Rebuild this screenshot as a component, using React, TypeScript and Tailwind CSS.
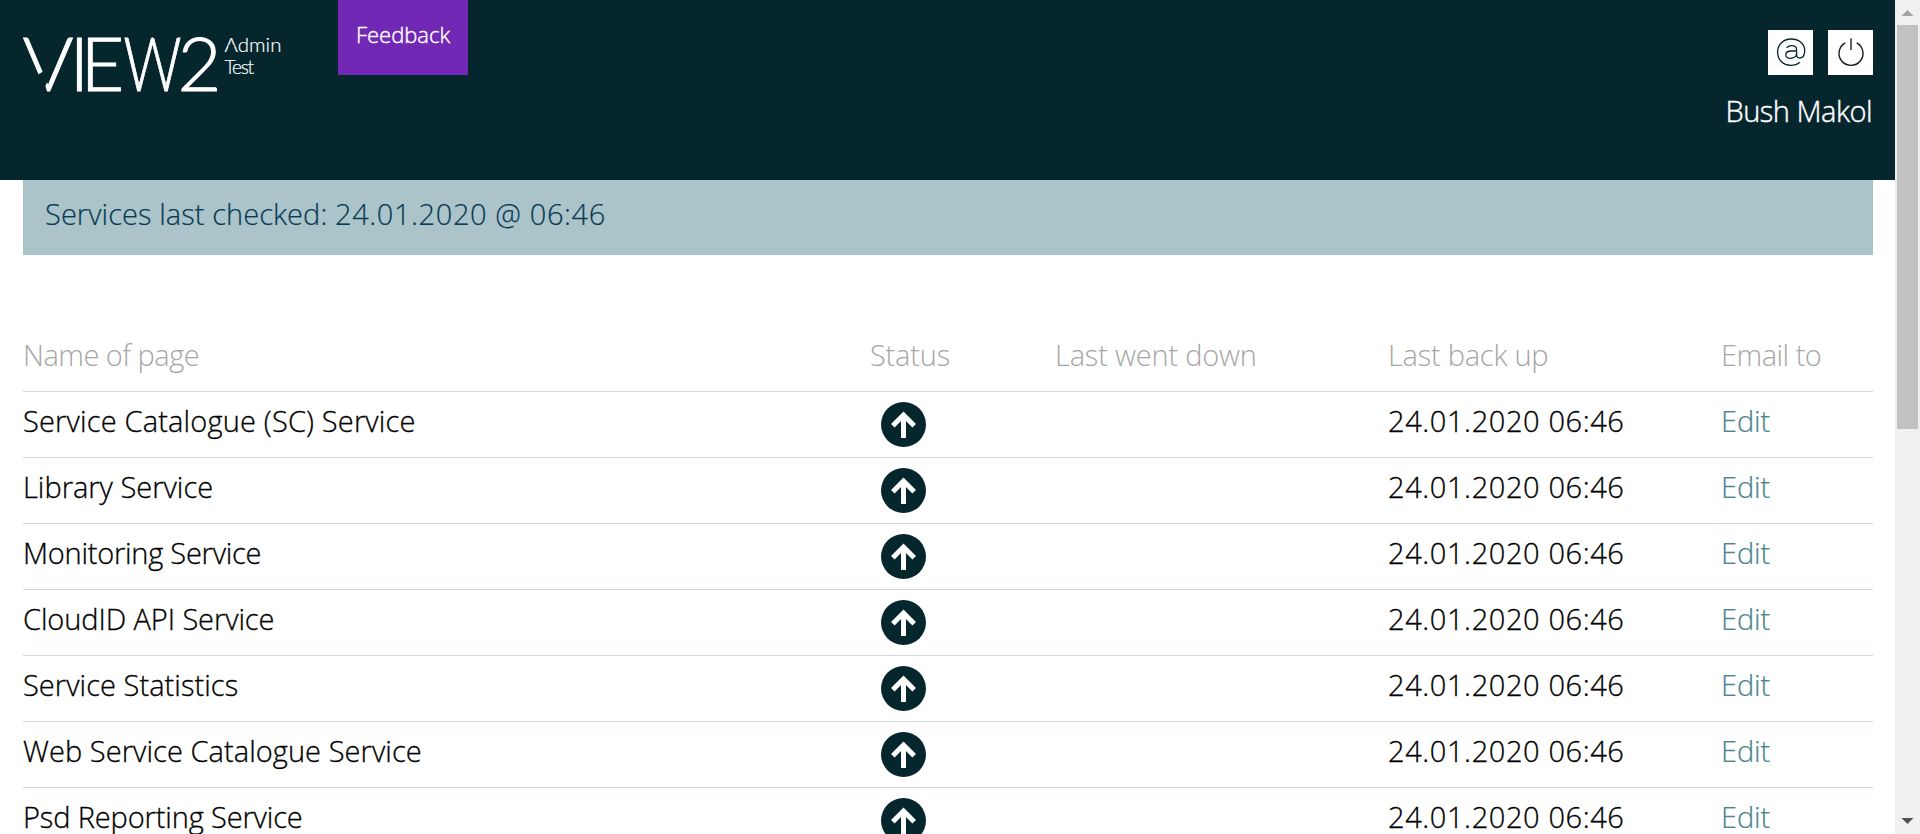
const services = [
  { name: 'Service Catalogue (SC) Service', tracking: 'tracking-[0.17px]' },
  { name: 'Library Service', tracking: 'tracking-[0px]' },
  { name: 'Monitoring Service', tracking: 'tracking-[-0.24px]' },
  { name: 'CloudID API Service', tracking: 'tracking-[-0.09px]' },
  { name: 'Service Statistics', tracking: 'tracking-[0.05px]' },
  { name: 'Web Service Catalogue Service', tracking: 'tracking-[0.06px]' },
  { name: 'Psd Reporting Service', tracking: 'tracking-[-0.14px]' },
];

function Logo() {
  return (
    <svg className="h-[100px] w-[270px] fill-white" viewBox="0 -16 270 100">
      <text
        y="61.3"
        className="stroke-white stroke-[0.9] font-['Lato',sans-serif] text-[75.5px] font-light"
      >
        <tspan x="-0.5" textLength="51" lengthAdjust="spacingAndGlyphs">V</tspan>
        <tspan x="46.5">I</tspan>
        <tspan x="57.5">E</tspan>
        <tspan x="100.5" textLength="58" lengthAdjust="spacingAndGlyphs">W</tspan>
        <tspan x="154.5" textLength="44" lengthAdjust="spacingAndGlyphs">2</tspan>
      </text>
      <path d="M11 47 L21 41 L27 46 L22.4 56 L24.5 63 H11 Z" className="fill-[#05262d]" />
      <text x="201.5" y="22" textLength="57" className="stroke-white stroke-[0.2] font-['Lato',sans-serif] text-[20.5px] font-light">
        Admin
      </text>
      <path d="M205.3 17 H211.3" className="stroke-[#05262d] stroke-3" />
      <text x="201.5" y="43.5" textLength="29.5" className="stroke-white stroke-[0.2] font-['Lato',sans-serif] text-[19px] font-light">
        Test
      </text>
    </svg>
  );
}

function AtIcon() {
  return (
    <svg className="size-[45px] fill-none stroke-[#05262d] stroke-[1.3]" viewBox="0 0 45 45">
      <path d="M31.8 32.2 C29.3 34.4 26.2 35.3 22.8 35.3 C15 35.3 9.6 29.7 9.6 22.2 C9.6 14.6 15.3 9 23 9 C31 9 36.7 13.8 36.7 20.6 C36.7 25.2 34.8 28 31.8 28 C29.8 28 28.6 26.8 28.6 24.8 V19.6 C28.6 17 26.8 15.6 23.8 15.6 C21.5 15.6 20 16.4 18.6 17.8" />
      <path d="M28.6 21 H23.6 C20 21 17.8 22.3 17.8 24.8 C17.8 27 19.6 28.3 22.3 28.3 C25.8 28.3 28.6 26.5 28.6 23.6" />
    </svg>
  );
}

function PowerIcon() {
  return (
    <svg className="size-[45px] fill-none stroke-[#1b1b1b] stroke-[1.4]" viewBox="0 0 45 45">
      <path d="M23 8.2 V20" />
      <path d="M17.3 12.8 A12 12 0 1 0 28.7 12.8" />
    </svg>
  );
}

function UpIcon() {
  return (
    <svg className="ml-[11px] size-[45px]" viewBox="0 0 45 45">
      <circle cx="22.5" cy="22.5" r="22.5" className="fill-[#05262d]" />
      <path d="M22.5 36 V13 M11.8 23.8 L22.5 13 L33.2 23.8" className="fill-none stroke-white stroke-[5]" />
    </svg>
  );
}

function Scrollbar() {
  return (
    <div className="flex w-[25px] shrink-0 flex-col items-center justify-between bg-[#f0f0f0]">
      <div className="flex flex-col items-center">
        <svg className="h-[25px] w-[25px] fill-[#a3a3a3]" viewBox="0 0 25 25">
          <path d="M6.5 16 L12.5 10 L18.5 16 Z" />
        </svg>
        <div className="h-[404px] w-[21px] bg-[#c1c1c1]" />
      </div>
      <svg className="h-[25px] w-[25px] fill-[#505050]" viewBox="0 0 25 25">
        <path d="M6.5 9 L12.5 15 L18.5 9 Z" />
      </svg>
    </div>
  );
}

const columns = 'grid grid-cols-[847px_185px_333px_333px_152px] border-b border-[#cfdbdc]';

export default function App() {
  return (
    <div className="flex h-[834px] w-full overflow-hidden bg-white font-['Open_Sans','Noto_Sans',sans-serif] text-[29px] leading-[40px] font-light text-black">
      <div className="flex min-w-0 flex-1 flex-col overflow-hidden">
        <header className="flex h-[180px] shrink-0 items-start justify-between bg-[#05262d] pr-[22px] pl-[23px] text-white">
          <div className="flex items-start">
            <div className="w-[315px] pt-[14px]">
              <Logo />
            </div>
            <button className="h-[75px] w-[130px] bg-[#7129b5] pb-[8px] text-[22px] leading-[40px] tracking-[0px] [-webkit-text-stroke:0.4px_white]">
              Feedback
            </button>
          </div>
          <div className="flex flex-col items-end pt-[30px]">
            <div className="flex gap-[15px]">
              <button aria-label="Contact" className="bg-white">
                <AtIcon />
              </button>
              <button aria-label="Log out" className="bg-white">
                <PowerIcon />
              </button>
            </div>
            <div className="mt-[16px] mr-px tracking-[-0.5px] [-webkit-text-stroke:0.4px_white]">Bush Makol</div>
          </div>
        </header>
        <main className="flex flex-col pr-[22px] pl-[23px]">
          <div className="h-[75px] bg-[#aac4c9] px-[22px] pt-[14px] text-[#0b3a55] [-webkit-text-stroke:0.2px_#0b3a55]">
            <span className="tracking-[0.06px]">Services last checked: </span>
            <span className="tracking-[0.6px]">24.01.2020 @ 06:46</span>
          </div>
          <div className={`${columns} mt-[70px] h-[67px] pt-[10px] text-[#a6a6a6]`}>
            <div className="tracking-[-0.5px]">Name of page</div>
            <div className="tracking-[-0.2px]">Status</div>
            <div className="tracking-[-0.2px]">Last went down</div>
            <div className="tracking-[-0.25px]">Last back up</div>
            <div className="tracking-[-0.5px]">Email to</div>
          </div>
          {services.map(({ name, tracking }) => (
            <div key={name} className={`${columns} h-[66px] shrink-0 pt-[9px]`}>
              <div className={`${tracking} [-webkit-text-stroke:0.3px_black]`}>{name}</div>
              <div className="pt-px">
                <UpIcon />
              </div>
              <div />
              <div className="tracking-[0.6px] [-webkit-text-stroke:0.3px_black]">24.01.2020 06:46</div>
              <a className="tracking-[-0.1px] text-[#4b858f] [-webkit-text-stroke:0.2px_#4b858f]">Edit</a>
            </div>
          ))}
        </main>
      </div>
      <Scrollbar />
    </div>
  );
}
